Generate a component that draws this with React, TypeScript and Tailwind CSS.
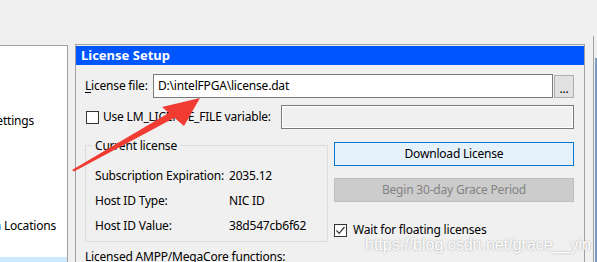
import React from "react";

const font = { fontFamily: '"Noto Sans", "Open Sans", sans-serif' };

const Checkbox = ({ checked }: { checked?: boolean }) => (
  <div className="w-[13px] h-[13px] border border-[#333333] bg-white flex items-center justify-center shrink-0">
    {checked && (
      <svg width="11" height="11" viewBox="0 0 11 11">
        <path d="M1.5 5.5 L4.2 8.3 L9.5 2" fill="none" stroke="#333333" strokeWidth="1.2" />
      </svg>
    )}
  </div>
);

const RedArrow = () => (
  <svg className="absolute left-0 top-0 pointer-events-none" width="597" height="262">
    <polygon points="72,170 74,171.5 176,117 172,111" fill="#f03c32" />
    <polygon points="200,98 162,107 184,126" fill="#f03c32" />
  </svg>
);

const App = () => {
  const rows = [
    ["Subscription Expiration:", "2035.12"],
    ["Host ID Type:", "NIC ID"],
    ["Host ID Value:", "38d547cb6f62"],
  ];
  return (
    <div className="relative w-[597px] h-[262px] overflow-hidden bg-[#f0f0f0] text-[12px] tracking-[-0.2px] text-black whitespace-nowrap" style={font}>
      <div className="flex h-full pt-[44px]">
        {/* left category list */}
        <div className="w-[68px] shrink-0 mt-[1px] overflow-hidden bg-white border-t border-r border-[#a0a0a0] flex flex-col">
          <div className="mt-[65px] shrink-0 w-[34px] flex justify-end overflow-hidden leading-[20px]">
            <span className="shrink-0">Headers &amp; Footers Settings</span>
          </div>
          <div className="mt-[85px] shrink-0 w-[56px] flex justify-end overflow-hidden leading-[20px]">
            <span className="shrink-0">IP Catalog Search Locations</span>
          </div>
          <div className="mt-[21px] shrink-0 h-[20px] bg-[#cce8ff]" />
        </div>

        {/* main panel */}
        <div className="ml-[7px] w-[510px] shrink-0 border border-[#a0a0a0] border-b-0 pt-[1px] flex flex-col">
          <div className="h-[19px] bg-[#0055ff] text-white font-bold text-[13px] tracking-normal pl-[5px] leading-[19px]">License Setup</div>
          <div className="pl-[9px] pr-[10px]">
            <div className="mt-[9px] flex items-center">
              <div className="w-[68px] shrink-0">
                <span className="underline underline-offset-2">L</span>icense file:
              </div>
              <div className="flex-1 h-[24px] bg-white border border-[#7a7a7a] flex items-center pl-[4px]">
                D:\intelFPGA\license.dat
              </div>
              <div className="ml-[1px] w-[20px] h-[23px] bg-[#e1e1e1] border border-[#adadad] flex items-end justify-center pb-[3px] leading-[10px]">
                ...
              </div>
            </div>
            <div className="mt-[7px] flex items-center">
              <div className="ml-[1px]">
                <Checkbox />
              </div>
              <div className="ml-[4px] w-[178px] shrink-0">Use LM_LICENSE_FILE variable:</div>
              <div className="flex-1 h-[24px] bg-[#f0f0f0] border border-[#7a7a7a] shadow-[inset_0_0_0_1px_#ffffff]" />
            </div>
            <div className="mt-[8px] flex items-start">
              <fieldset className="w-[243px] shrink-0 border border-[#dcdcdc] pb-[3px]">
                <legend className="ml-[6px] px-[3px] leading-[17px]">Current license</legend>
                <div className="pt-[9px] pl-[9px]">
                  {rows.map(([k, v]) => (
                    <div key={k} className="flex h-[25px] items-center">
                      <div className="w-[134px] shrink-0">{k}</div>
                      <div>{v}</div>
                    </div>
                  ))}
                </div>
              </fieldset>
              <div className="ml-[6px] flex-1 mt-[5px] flex flex-col">
                <div className="h-[24px] bg-[#e5f1fb] border border-[#0078d7] flex items-center justify-center">
                  Download License
                </div>
                <div className="mt-[12px] h-[24px] bg-[#cccccc] border border-[#bfbfbf] text-[#838383] flex items-center justify-center">
                  Begin 30-day Grace Period
                </div>
                <div className="mt-[19px] flex items-center">
                  <Checkbox checked />
                  <span className="ml-[6px]">Wait for floating licenses</span>
                </div>
              </div>
            </div>
            <div className="mt-[6px] leading-[17px]">Licensed AMPP/MegaCore functions:</div>
          </div>
        </div>

        {/* right edge */}
        <div className="ml-[8px] w-[1px] bg-[#a0a0a0] mt-[-8px]" />
        <div className="ml-[1px] w-[2px] bg-[#7a9cc0] mt-[14px]" />
      </div>

      <div
        className="absolute left-[365px] top-[233px] text-[16px] tracking-normal text-white [text-shadow:0_0_2px_#9a9a9a]"
        style={{ fontFamily: '"Liberation Sans", Arial, sans-serif' }}
      >
        https://blog.csdn.net/grace__yin
      </div>
      <RedArrow />
    </div>
  );
};

export default App;
